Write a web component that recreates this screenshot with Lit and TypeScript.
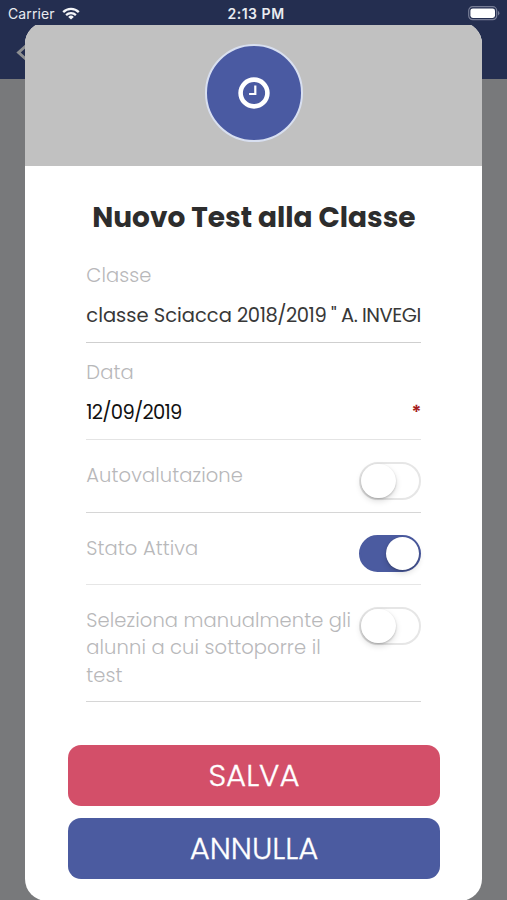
import { LitElement, html, css } from "lit";
import { classMap } from "lit/directives/class-map.js";

class ToggleSwitch extends LitElement {
  static properties = { on: { type: Boolean, reflect: true } };
  declare on: boolean;
  static styles = css`
    :host { display: block; flex: none; }
    .track {
      box-sizing: border-box; display: flex; align-items: center;
      width: 62px; height: 37.5px;
      border: 2px solid #e6e6e6; border-radius: 19px; background: #fff;
    }
    .knob {
      flex: none; width: 34.5px; height: 34.5px; border-radius: 50%; background: #fff;
      box-shadow: 0 3px 6px rgba(0, 0, 0, 0.14), 0 1px 2px rgba(0, 0, 0, 0.2);
    }
    .track.on { justify-content: flex-end; border-color: #4b5ba0; background: #4b5ba0; }
    .on .knob { width: 33.5px; height: 33.5px; }
  `;
  render() {
    return html`<div class=${classMap({ track: true, on: this.on })}><div class="knob"></div></div>`;
  }
}
customElements.define("toggle-switch", ToggleSwitch);

class AppRoot extends LitElement {
  static styles = css`
    :host {
      display: block; position: relative; height: 900px; overflow: hidden;
      background: #78797b; color: #2f2f2f;
      font-family: Poppins, Inter, sans-serif;
    }
    .backdrop {
      position: absolute; inset: 0 0 auto 0; height: 79px; background: #242e50;
    }
    .back { position: absolute; left: 16px; top: 42px; display: block; }
    .status {
      position: relative; z-index: 2; box-sizing: border-box; height: 25px; padding: 2px 7px 0 8px;
      display: grid; grid-template-columns: 1fr auto 1fr; align-items: center;
      background: #242e50; color: #e9ebf0; font-family: Inter, sans-serif; font-size: 14px; line-height: 23px;
    }
    .carrier { display: flex; align-items: center; gap: 7px; letter-spacing: 0.1px; }
    .time { font-weight: 600; letter-spacing: 0.52px; padding-left: 4px; }
    .battery { justify-self: end; display: block; }
    .carrier svg { display: block; }
    .modal {
      position: relative; box-sizing: border-box; width: 457.1px; height: 879px;
      margin: -3px 0 0 25.3px; overflow: hidden; border-radius: 22px; background: #fff;
      display: flex; flex-direction: column;
    }
    .head {
      flex: none; box-sizing: border-box; height: 144px; padding-top: 21.5px;
      display: flex; justify-content: center; background: #c1c1c1;
    }
    .badge {
      box-sizing: border-box; width: 98px; height: 98px; border-radius: 50%;
      border: 2px solid #d8dff0; background: #4a5aa2;
      display: flex; align-items: center; justify-content: center;
    }
    h1 {
      margin: 32px 0 0; height: 40px; line-height: 40px; text-align: center; white-space: nowrap;
      font-size: 28px; font-weight: 700; color: #2d2d2d;
    }
    .form { width: 335px; margin: 19px 0 0 61px; font-size: 19.5px; line-height: 27.3px; }
    .field {
      box-sizing: border-box; height: 97px; padding-top: 16px; border-bottom: 1px solid #e4e4e4;
      display: flex; flex-direction: column; gap: 13px;
    }
    .field.first { height: 86px; border-color: #cfcfcf; padding-top: 5px; }
    .label { color: #b8b8ba; font-weight: 300; letter-spacing: 0.09px; }
    .value { white-space: pre; color: #383838; }
    .tight { letter-spacing: -0.46px; }
    .value.date { display: flex; justify-content: space-between; color: #111; letter-spacing: -0.72px; }
    .required { color: #a51c1c; font-size: 19px; font-weight: 600; letter-spacing: 0; }
    .row {
      box-sizing: border-box; height: 72.5px; padding-top: 22px; border-bottom: 1px solid #d6d6d6;
      display: flex; justify-content: space-between; align-items: flex-start;
    }
    .row.light { border-color: #e6e6e6; }
    .row.tall { height: 117.3px; }
    .row .label { white-space: pre-line; }
    .actions { width: 372px; margin: 42.5px 0 0 42.7px; display: flex; flex-direction: column; gap: 12.4px; }
    button {
      height: 61px; padding: 0; border: 0; border-radius: 13px; color: #fff;
      font: 300 30.8px/61px Poppins, Inter, sans-serif;
      -webkit-text-stroke: 0.3px #fff;
    }
    .save { background: #d34f69; }
    .cancel { background: #4b5ba0; }
  `;

  render() {
    return html`
      <div class="backdrop">
        <svg class="back" width="20" height="22" viewBox="0 0 20 22">
          <path d="M12 2 2.6 10.5 12 19" fill="none" stroke="#8e9092" stroke-width="3" />
        </svg>
      </div>
      <div class="status">
        <div class="carrier">
          <span>Carrier</span>
          <svg width="18" height="13" viewBox="0 0 18 13" fill="none" stroke="#f4f5f8">
            <path d="M1.2 5.1a11 11 0 0 1 15.6 0" stroke-width="2.3" />
            <path d="M4.1 8.1a7 7 0 0 1 9.8 0" stroke-width="2.2" />
            <path d="M9 12.6 6.2 9.9a4 4 0 0 1 5.6 0z" fill="#f4f5f8" stroke="none" />
          </svg>
        </div>
        <span class="time">2:13 PM</span>
        <svg class="battery" width="32" height="15" viewBox="0 0 32 15">
          <rect x="0.7" y="0.7" width="28" height="13" rx="4" fill="none" stroke="#777d96" stroke-width="1.2" />
          <rect x="2.4" y="2.4" width="24.6" height="9.6" rx="2.4" fill="#fff" />
          <path d="M30 5v4.4q1.4-.6 1.4-2.2T30 5z" fill="#777d96" />
        </svg>
      </div>
      <div class="modal">
        <div class="head">
          <div class="badge">
            <svg width="32" height="32" viewBox="0 0 32 32" fill="none" stroke="#fff">
              <circle cx="16" cy="16" r="13.4" stroke-width="4.6" />
              <path d="M17.3 8.5v8.5h-6.2" stroke-width="2.2" />
            </svg>
          </div>
        </div>
        <h1>Nuovo Test alla Classe</h1>
        <div class="form">
          <div class="field first">
            <div class="label">Classe</div>
            <div class="value">classe Sciacca <span class="tight">2018/2019 " A. INVEGI</span></div>
          </div>
          <div class="field">
            <div class="label">Data</div>
            <div class="value date"><span>12/09/2019</span><span class="required">*</span></div>
          </div>
          <div class="row">
            <div class="label">Autovalutazione</div>
            <toggle-switch></toggle-switch>
          </div>
          <div class="row light">
            <div class="label">Stato Attiva</div>
            <toggle-switch on></toggle-switch>
          </div>
          <div class="row tall">
            <div class="label">${"Seleziona manualmente gli\nalunni a cui sottoporre il\ntest"}</div>
            <toggle-switch></toggle-switch>
          </div>
        </div>
        <div class="actions">
          <button class="save">SALVA</button>
          <button class="cancel">ANNULLA</button>
        </div>
      </div>
    `;
  }
}
customElements.define("app-root", AppRoot);
